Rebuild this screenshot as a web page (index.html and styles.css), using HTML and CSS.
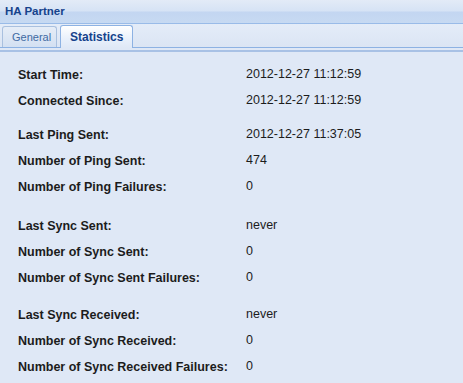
FILE: index.html
```html
<!DOCTYPE html>
<html lang="en">
<head>
    <meta charset="UTF-8">
    <title>HA Partner</title>
    <link rel="stylesheet" href="styles.css">
</head>
<body>
    <div class="panel">
        <div class="panel-header">HA Partner</div>
        <div class="tab-strip">
            <div class="tab">General</div>
            <div class="tab active">Statistics</div>
        </div>
        <div class="tab-spacer"></div>

        <div class="panel-body">
            <div class="group">
                <div class="row"><span class="label">Start Time:</span><span class="value">2012-12-27 11:12:59</span></div>
                <div class="row"><span class="label">Connected Since:</span><span class="value">2012-12-27 11:12:59</span></div>
            </div>
            <div class="group">
                <div class="row"><span class="label">Last Ping Sent:</span><span class="value">2012-12-27 11:37:05</span></div>
                <div class="row"><span class="label">Number of Ping Sent:</span><span class="value">474</span></div>
                <div class="row"><span class="label">Number of Ping Failures:</span><span class="value">0</span></div>
            </div>
            <div class="group">
                <div class="row"><span class="label">Last Sync Sent:</span><span class="value">never</span></div>
                <div class="row"><span class="label">Number of Sync Sent:</span><span class="value">0</span></div>
                <div class="row"><span class="label">Number of Sync Sent Failures:</span><span class="value">0</span></div>
            </div>
            <div class="group">
                <div class="row"><span class="label">Last Sync Received:</span><span class="value">never</span></div>
                <div class="row"><span class="label">Number of Sync Received:</span><span class="value">0</span></div>
                <div class="row"><span class="label">Number of Sync Received Failures:</span><span class="value">0</span></div>
            </div>
        </div>
    </div>
</body>
</html>
```

FILE: styles.css
```css
body {
    margin: 0;
    padding: 0;
    font-family: "Liberation Sans", Arial, sans-serif;
    background-color: #dfe8f6;
}

.panel {
    width: 463px;
    height: 383px;
    overflow: hidden;
    background-color: #dfe8f6;
}

.panel-header {
    height: 24px;
    box-sizing: border-box;
    padding: 5px 0 0 5px;
    font-size: 11.5px;
    font-weight: bold;
    color: #15428b;
    background: linear-gradient(#e3ebf7 0, #d6e3f5 11px, #c3d6f1 12px, #c7daf2 24px);
    border-bottom: 1px solid #99bbe8;
}

.tab-strip {
    display: flex;
    align-items: flex-end;
    gap: 3px;
    height: 23px;
    padding-left: 2px;
    background: linear-gradient(#e4ecf8, #dbe5f4);
    border-bottom: 1px solid #8db2e3;
}

.tab {
    height: 21px;
    box-sizing: border-box;
    padding: 4px 0 0 9px;
    width: 55px;
    font-size: 11px;
    color: #416aa3;
    background: linear-gradient(#e6edf7, #d3e0f2);
    border: 1px solid #a9c0df;
    border-bottom: none;
    border-radius: 3px 3px 0 0;
}

.tab.active {
    width: 73px;
    height: 23px;
    padding: 4px 0 0 9px;
    margin-bottom: -1px;
    font-size: 12px;
    font-weight: bold;
    color: #15428b;
    background: linear-gradient(#ffffff, #e8f0fb 60%, #dfe8f6);
    border-color: #8db2e3;
}

.tab-spacer {
    height: 2px;
    background-color: #dfe8f6;
    border-bottom: 2px solid #a8c1e5;
}

.panel-body {
    padding: 10px 0 0 18px;
}

.group:nth-child(1) {
    margin-bottom: 8px;
}

.group:nth-child(2) {
    margin-bottom: 13px;
}

.group:nth-child(3) {
    margin-bottom: 11px;
}

.row {
    display: flex;
    align-items: center;
    height: 26px;
    font-size: 12.5px;
    color: #1c1c1c;
}

.label {
    width: 228px;
    font-weight: bold;
}

.value {
    margin-top: -2px;
}
```
